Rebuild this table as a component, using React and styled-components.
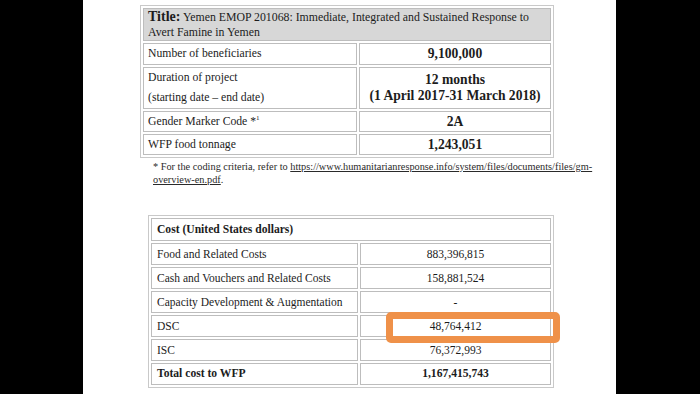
import React from "react";
import styled, { createGlobalStyle } from "styled-components";

const GlobalStyle = createGlobalStyle`
  html, body {
    margin: 0;
    padding: 0;
    background: #000;
  }
  body {
    font-family: "Liberation Serif", "Times New Roman", serif;
    color: #1c1c1c;
  }
`;

const Screen = styled.div`
  width: 700px;
  height: 394px;
  background: #000;
  display: flex;
  overflow: hidden;
`;

const Page = styled.div`
  width: 533px;
  margin-left: 83px;
  height: 394px;
  background: #fff;
  padding-top: 5px;
  box-sizing: border-box;
  display: flex;
  flex-direction: column;
`;

const Table = styled.table`
  table-layout: fixed;
  border-collapse: separate;
  border-spacing: 2px;
  border: 1px solid #c9c9c9;
  width: ${(p) => p.$width}px;
  margin-left: ${(p) => p.$offset}px;
`;

const Row = styled.tr`
  height: ${(p) => p.$h}px;
`;

const Cell = styled.td`
  border: 1px solid #bdbdbd;
  padding: 0 ${(p) => (p.$pad ? p.$pad : 4)}px;
  font-size: ${(p) => p.$size || 11.7}px;
  font-weight: ${(p) => (p.$bold ? 700 : 400)};
  text-align: ${(p) => (p.$center ? "center" : "left")};
  vertical-align: middle;
  line-height: ${(p) => p.$lh || 14}px;
  white-space: nowrap;
  overflow: visible;
`;

const TitleCell = styled.td`
  border: 1px solid #bdbdbd;
  background: #d7d7d7;
  padding: 0 4px;
  font-size: 11.8px;
  line-height: 15px;
  vertical-align: middle;
  white-space: nowrap;
`;

const TitleLabel = styled.b`
  font-size: 14px;
`;

const Sup = styled.sup`
  font-size: 7px;
  vertical-align: 5px;
  line-height: 0;
`;

const Footnote = styled.div`
  margin-left: 70px;
  margin-top: 2px;
  font-size: 10.3px;
  line-height: 13px;
  color: #2a2a2a;
  white-space: nowrap;
`;

const Link = styled.span`
  text-decoration: underline;
`;

const CostWrap = styled.div`
  position: relative;
  margin-top: 29px;
  margin-left: 65px;
  width: 406px;
`;

const Highlight = styled.div`
  position: absolute;
  left: 238px;
  top: 97px;
  width: 174px;
  height: 31px;
  box-sizing: border-box;
  border: 7px solid #ef9149;
  border-radius: 5px;
  pointer-events: none;
`;

const costs = [
  ["Food and Related Costs", "883,396,815"],
  ["Cash and Vouchers and Related Costs", "158,881,524"],
  ["Capacity Development & Augmentation", "-"],
  ["DSC", "48,764,412"],
  ["ISC", "76,372,993"],
];

export default function App() {
  return (
    <>
      <GlobalStyle />
      <Screen>
        <Page>
          <Table $width={414} $offset={57}>
            <colgroup>
              <col style={{ width: 214 }} />
              <col style={{ width: 192 }} />
            </colgroup>
            <tbody>
              <Row $h={32}>
                <TitleCell colSpan={2}>
                  <TitleLabel>Title:</TitleLabel>
                  <span> Yemen EMOP 201068: Immediate, Integrated and Sustained Response to</span>
                  <br />
                  <span>Avert Famine in Yemen</span>
                </TitleCell>
              </Row>
              <Row $h={22}>
                <Cell>Number of beneficiaries</Cell>
                <Cell $bold $center $size={13.6}>9,100,000</Cell>
              </Row>
              <Row $h={42}>
                <Cell $lh={20}>
                  Duration of project
                  <br />
                  (starting date – end date)
                </Cell>
                <Cell $bold $center $size={13.6} $lh={16}>
                  12 months
                  <br />
                  (1 April 2017-31 March 2018)
                </Cell>
              </Row>
              <Row $h={21}>
                <Cell>
                  Gender Marker Code *<Sup>1</Sup>
                </Cell>
                <Cell $bold $center $size={13.6}>2A</Cell>
              </Row>
              <Row $h={21}>
                <Cell>WFP food tonnage</Cell>
                <Cell $bold $center $size={13.6}>1,243,051</Cell>
              </Row>
            </tbody>
          </Table>

          <Footnote>
            <span>* For the coding criteria, refer to </span>
            <Link>https://www.humanitarianresponse.info/system/files/documents/files/gm-</Link>
            <br />
            <Link>overview-en.pdf</Link>
            <span>.</span>
          </Footnote>

          <CostWrap>
            <Table $width={406} $offset={0}>
              <colgroup>
                <col style={{ width: 207 }} />
                <col style={{ width: 191 }} />
              </colgroup>
              <tbody>
                <Row $h={23}>
                  <Cell colSpan={2} $bold $size={11.6} $pad={5}>
                    Cost (United States dollars)
                  </Cell>
                </Row>
                {costs.map(([label, value]) => (
                  <Row $h={22} key={label}>
                    <Cell $size={11.5} $pad={5}>{label}</Cell>
                    <Cell $size={11.5} $center>{value}</Cell>
                  </Row>
                ))}
                <Row $h={22}>
                  <Cell $bold $size={11.6} $pad={5}>Total cost to WFP</Cell>
                  <Cell $bold $center $size={11.6}>1,167,415,743</Cell>
                </Row>
              </tbody>
            </Table>
            <Highlight />
          </CostWrap>
        </Page>
      </Screen>
    </>
  );
}
